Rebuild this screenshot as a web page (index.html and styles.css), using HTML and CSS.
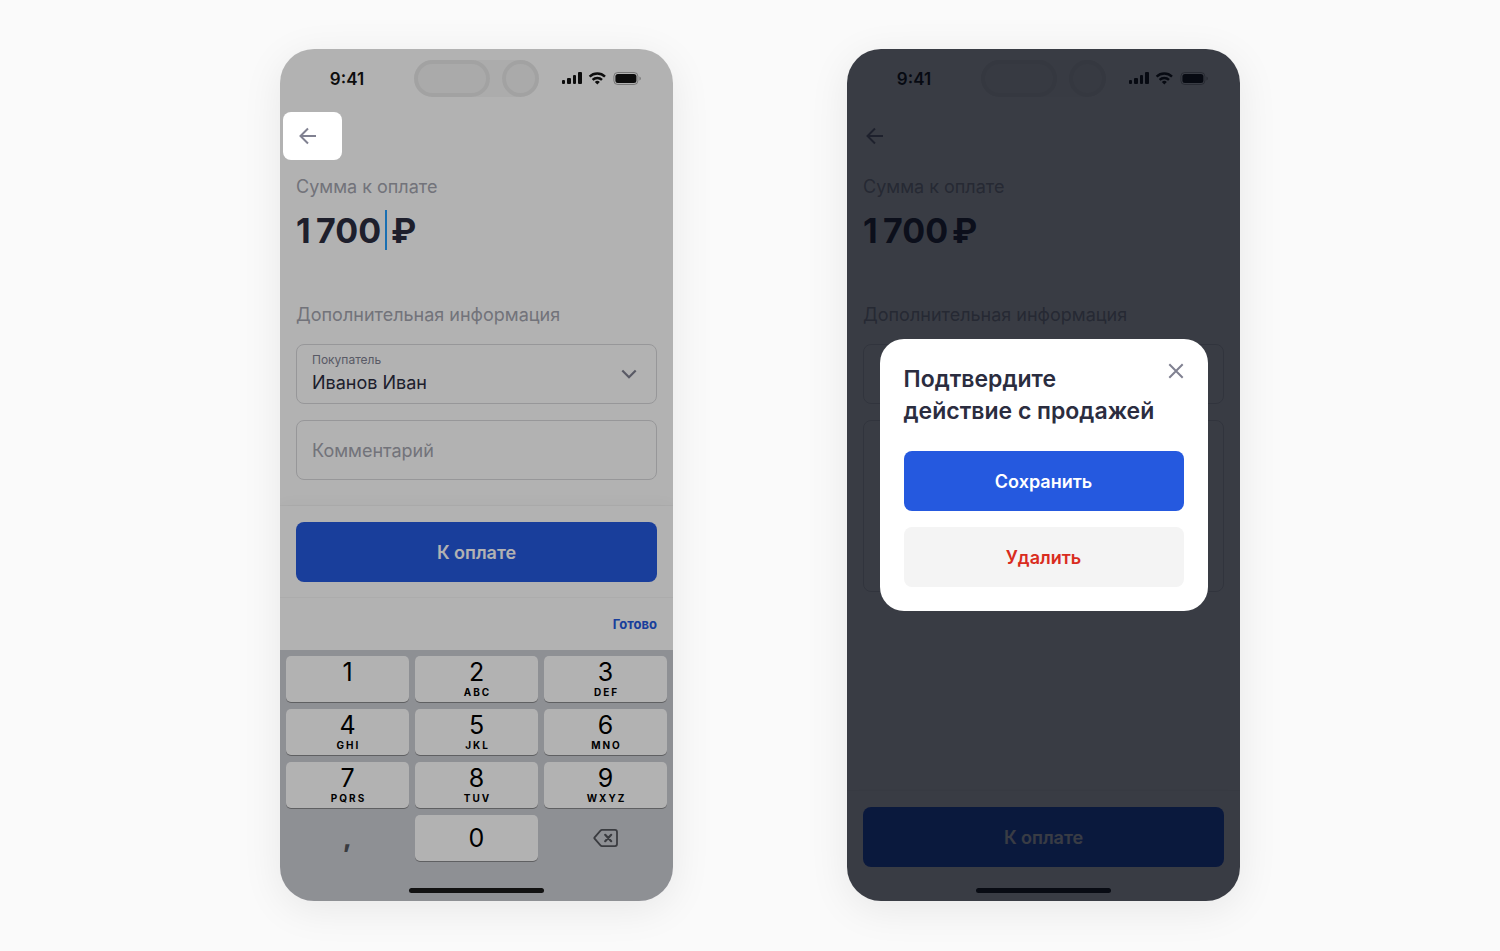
FILE: index.html
```html
<!DOCTYPE html>
<html lang="ru">
<head>
    <meta charset="UTF-8">
    <meta name="viewport" content="width=device-width, initial-scale=1.0">
    <title>Сумма к оплате</title>
    <link rel="stylesheet" href="styles.css">
</head>
<body>
    <!-- shared icons -->
    <svg class="sprite" aria-hidden="true">
        <symbol id="status-icons" viewBox="0 0 80 14">
            <rect x="0" y="8" width="3" height="4" rx="1"/>
            <rect x="5" y="6" width="4" height="6" rx="1"/>
            <rect x="11" y="3" width="3" height="9" rx="1"/>
            <rect x="16" y="0" width="4" height="12" rx="1"/>
            <g fill="none" stroke="currentColor" stroke-width="2.4">
                <path d="M27.6 4.6a11 11 0 0 1 15.4 0"/>
                <path d="M30.6 7.9a6.7 6.7 0 0 1 9.4 0"/>
            </g>
            <path d="M32.8 9.9a3.7 3.7 0 0 1 5 0L35.3 12.4z"/>
            <rect x="51.9" y=".5" width="24" height="12" rx="3.8" fill="none" stroke="currentColor" opacity=".35"/>
            <rect x="53.4" y="2" width="21" height="9" rx="2.5"/>
            <path d="M77.5 4.6v4a2.2 2.2 0 0 0 0-4z" opacity=".4"/>
        </symbol>
        <symbol id="arrow-left" viewBox="0 0 18 18">
            <path d="M17 9H2M9 1.5 1.5 9 9 16.5" fill="none" stroke="currentColor" stroke-width="2"/>
        </symbol>
        <symbol id="chevron-down" viewBox="0 0 16 10">
            <path d="m1.3 1.5 6.7 6.7 6.7-6.7" fill="none" stroke="currentColor" stroke-width="2.2"/>
        </symbol>
    </svg>

    <main class="screens">
        <section class="phone">
            <div class="status-bar">
                <span class="time">9:41</span>
                <div class="island"><span class="pill"></span><span class="lens"></span></div>
                <svg class="status-icons"><use href="#status-icons"/></svg>
            </div>
            <button class="back highlighted" type="button" aria-label="Назад">
                <svg width="18" height="18"><use href="#arrow-left"/></svg>
            </button>
            <div class="content">
                <label class="caption" for="amount1">Сумма к оплате</label>
                <div class="amount">
                    <input id="amount1" type="text" value="1&#8201;700">
                    <span class="caret"></span>
                    <span>₽</span>
                </div>
                <h2 class="caption">Дополнительная информация</h2>
                <div class="field select-field">
                    <label for="buyer1">Покупатель</label>
                    <select id="buyer1"><option>Иванов Иван</option></select>
                    <svg class="chevron" width="16" height="10"><use href="#chevron-down"/></svg>
                </div>
                <input class="field" type="text" placeholder="Комментарий" aria-label="Комментарий">
            </div>
            <div class="pay-bar">
                <button class="btn primary" type="button">К оплате</button>
            </div>
            <div class="keyboard-bar"><button type="button">Готово</button></div>
            <div class="keyboard">
                <div class="keys">
                    <button class="key" type="button">1</button>
                    <button class="key" type="button">2<small>ABC</small></button>
                    <button class="key" type="button">3<small>DEF</small></button>
                    <button class="key" type="button">4<small>GHI</small></button>
                    <button class="key" type="button">5<small>JKL</small></button>
                    <button class="key" type="button">6<small>MNO</small></button>
                    <button class="key" type="button">7<small>PQRS</small></button>
                    <button class="key" type="button">8<small>TUV</small></button>
                    <button class="key" type="button">9<small>WXYZ</small></button>
                    <button class="key plain comma" type="button">,</button>
                    <button class="key zero" type="button">0</button>
                    <button class="key plain" type="button" aria-label="Стереть">
                        <svg width="26" height="20" viewBox="0 0 26 20" fill="none" stroke="currentColor" stroke-width="1.8" stroke-linejoin="round" stroke-linecap="round">
                            <path d="M9 1.9h13a2 2 0 0 1 2 2v12.2a2 2 0 0 1-2 2H9a2 2 0 0 1-1.5-.7L1.4 10.4a.7.7 0 0 1 0-.8L7.5 2.6A2 2 0 0 1 9 1.9z"/>
                            <path d="m12.2 6.8 6 6.4m0-6.4-6 6.4" stroke-width="2.2"/>
                        </svg>
                    </button>
                </div>
                <div class="home"></div>
            </div>
            <div class="overlay light"></div>
        </section>

        <section class="phone">
            <div class="status-bar">
                <span class="time">9:41</span>
                <div class="island"><span class="pill"></span><span class="lens"></span></div>
                <svg class="status-icons"><use href="#status-icons"/></svg>
            </div>
            <button class="back" type="button" aria-label="Назад">
                <svg width="18" height="18"><use href="#arrow-left"/></svg>
            </button>
            <div class="content">
                <label class="caption" for="amount2">Сумма к оплате</label>
                <div class="amount">
                    <input id="amount2" type="text" value="1&#8201;700">
                    <span>₽</span>
                </div>
                <h2 class="caption">Дополнительная информация</h2>
                <div class="field"></div>
                <textarea class="field tall" aria-label="Комментарий"></textarea>
            </div>
            <div class="pay-bar bottom">
                <button class="btn primary" type="button">К оплате</button>
                <div class="home"></div>
            </div>
            <div class="overlay dark">
                <div class="dialog" role="dialog" aria-labelledby="dialog-title">
                    <div class="dialog-head">
                        <h1 id="dialog-title">Подтвердите<br>действие с продажей</h1>
                        <button class="close" type="button" aria-label="Закрыть">
                            <svg width="16" height="16" viewBox="0 0 16 16" fill="none" stroke="currentColor" stroke-width="2">
                                <path d="m1.3 1.3 13.4 13.4m0-13.4L1.3 14.7"/>
                            </svg>
                        </button>
                    </div>
                    <button class="btn primary" type="button">Сохранить</button>
                    <button class="btn danger" type="button">Удалить</button>
                </div>
            </div>
        </section>
    </main>
</body>
</html>
```
FILE: styles.css
```css
* { box-sizing: border-box; }
body { margin: 0; background-color: #fafafa; color: #2b2d3f; font-family: Inter, "Noto Sans", sans-serif; }
button, input, select, textarea { font: inherit; color: inherit; }
button { border: none; cursor: pointer; padding: 0; }
h1, h2 { margin: 0; }
.sprite { display: none; }

.screens { display: flex; justify-content: center; gap: 174px; padding: 49px 0 50px 20px; }
.phone {
    position: relative;
    display: flex;
    flex-direction: column;
    flex: 1;
    max-width: 393px;
    background-color: white;
    border-radius: 34px;
    overflow: hidden;
    box-shadow: 0 8px 40px rgba(0,0,0,0.08);
}

/* status bar */
.status-bar {
    display: grid;
    grid-template-columns: 1fr 125px 1fr;
    align-items: center;
    padding: 11px 0 15px;
    color: #141414;
}
.time { text-align: center; font-size: 17px; font-weight: 600; line-height: 22px; }
.island { display: flex; justify-content: space-between; height: 37px; border-radius: 19px; background-color: #f7f7f7; }
.pill, .lens { border: 4px solid #e9e9e9; border-radius: 19px; background-color: #f4f4f4; }
.pill { width: 76px; }
.lens { width: 37px; }
.status-icons { width: 80px; height: 14px; justify-self: center; margin-right: 8px; fill: currentColor; }

.back {
    display: flex;
    align-items: center;
    width: 59px;
    height: 48px;
    margin-left: 3px;
    padding-left: 16px;
    border-radius: 8px;
    background-color: white;
    color: #808191;
}
.back.highlighted { position: relative; z-index: 2; }

/* form */
.content { display: flex; flex-direction: column; padding: 15px 16px 26px; }
.caption { color: #a4a5af; font-size: 18px; font-weight: 400; line-height: 24px; }
.amount { display: flex; align-items: center; height: 40px; margin: 11px 0 53px; font-size: 34px; font-weight: 700; }
.amount input { width: 89px; padding: 0; border: none; background: none; outline: none; }
.caret { width: 2px; height: 40px; margin-right: 4px; background-color: #259fff; }
.field {
    width: 100%;
    height: 60px;
    padding: 0 15px;
    border: 1px solid #d9d9dc;
    border-radius: 8px;
    background-color: white;
    font-size: 18px;
}
.field::placeholder { color: #a4a5af; opacity: 1; }
.caption + .field { margin: 17px 0 16px; }
.tall { height: 172px; resize: none; }
.select-field { position: relative; display: flex; flex-direction: column; padding-top: 7px; }
.select-field label { color: #808191; font-size: 12px; line-height: 16px; }
.select-field select { appearance: none; margin-top: 1px; padding: 0; border: none; background: none; line-height: 28px; }
.chevron { position: absolute; right: 19px; top: 24px; color: #808191; }

.btn { width: 100%; height: 60px; border-radius: 8px; font-size: 18px; font-weight: 600; }
.primary { background-color: #2559df; color: white; }
.danger { background-color: #f4f4f4; color: #d92c20; }
.pay-bar { padding: 16px; box-shadow: 0 0 16px rgba(0,0,0,0.04), 0 0 1px rgba(0,0,0,0.2); }
.pay-bar.bottom { margin-top: auto; padding-bottom: 8px; }
.home { width: 135px; height: 5px; margin: 0 auto; border-radius: 3px; background-color: #1a1a1a; }
.pay-bar .home { margin-top: 21px; }

/* keyboard */
.keyboard-bar { position: relative; display: flex; justify-content: flex-end; padding: 16px; background-color: white; box-shadow: 0 0 1px rgba(0,0,0,0.2); }
.keyboard-bar button { background: none; color: #2559df; font-size: 13px; font-weight: 700; line-height: 20px; }
.keyboard { position: relative; padding: 6px 6px 8px; background-color: #ccced5; }
.keys { display: grid; grid-template-columns: repeat(3, 1fr); gap: 7px 6px; margin-bottom: 27px; }
.key {
    display: flex;
    flex-direction: column;
    align-items: center;
    height: 46px;
    padding-top: 1px;
    border-radius: 5px;
    background-color: white;
    box-shadow: 0 1px 0 #898a8d;
    color: black;
    font-size: 25px;
    line-height: 30px;
}
.key small { padding-left: 2px; font-size: 10px; font-weight: 700; line-height: 10px; letter-spacing: 2px; }
.key.zero { justify-content: center; padding: 0; }
.key.plain { justify-content: center; padding: 0; background: none; box-shadow: none; color: #54565c; }
.key.comma { font-weight: 800; }

/* dimming and dialog */
.overlay { position: absolute; inset: 0; z-index: 1; }
.light { background-color: rgba(0,0,0,0.3); }
.dark { display: flex; align-items: center; justify-content: center; padding: 0 32px; background-color: rgba(4,7,18,0.79); }
.dialog {
    display: flex;
    flex-direction: column;
    gap: 16px;
    width: 100%;
    max-width: 328px;
    padding: 24px;
    border-radius: 24px;
    background-color: white;
}
.dialog-head { display: flex; justify-content: space-between; align-items: flex-start; margin-bottom: 8px; }
.dialog h1 { font-size: 23px; font-weight: 600; line-height: 32px; white-space: nowrap; }
.close { display: flex; background: none; color: #808191; }
```
